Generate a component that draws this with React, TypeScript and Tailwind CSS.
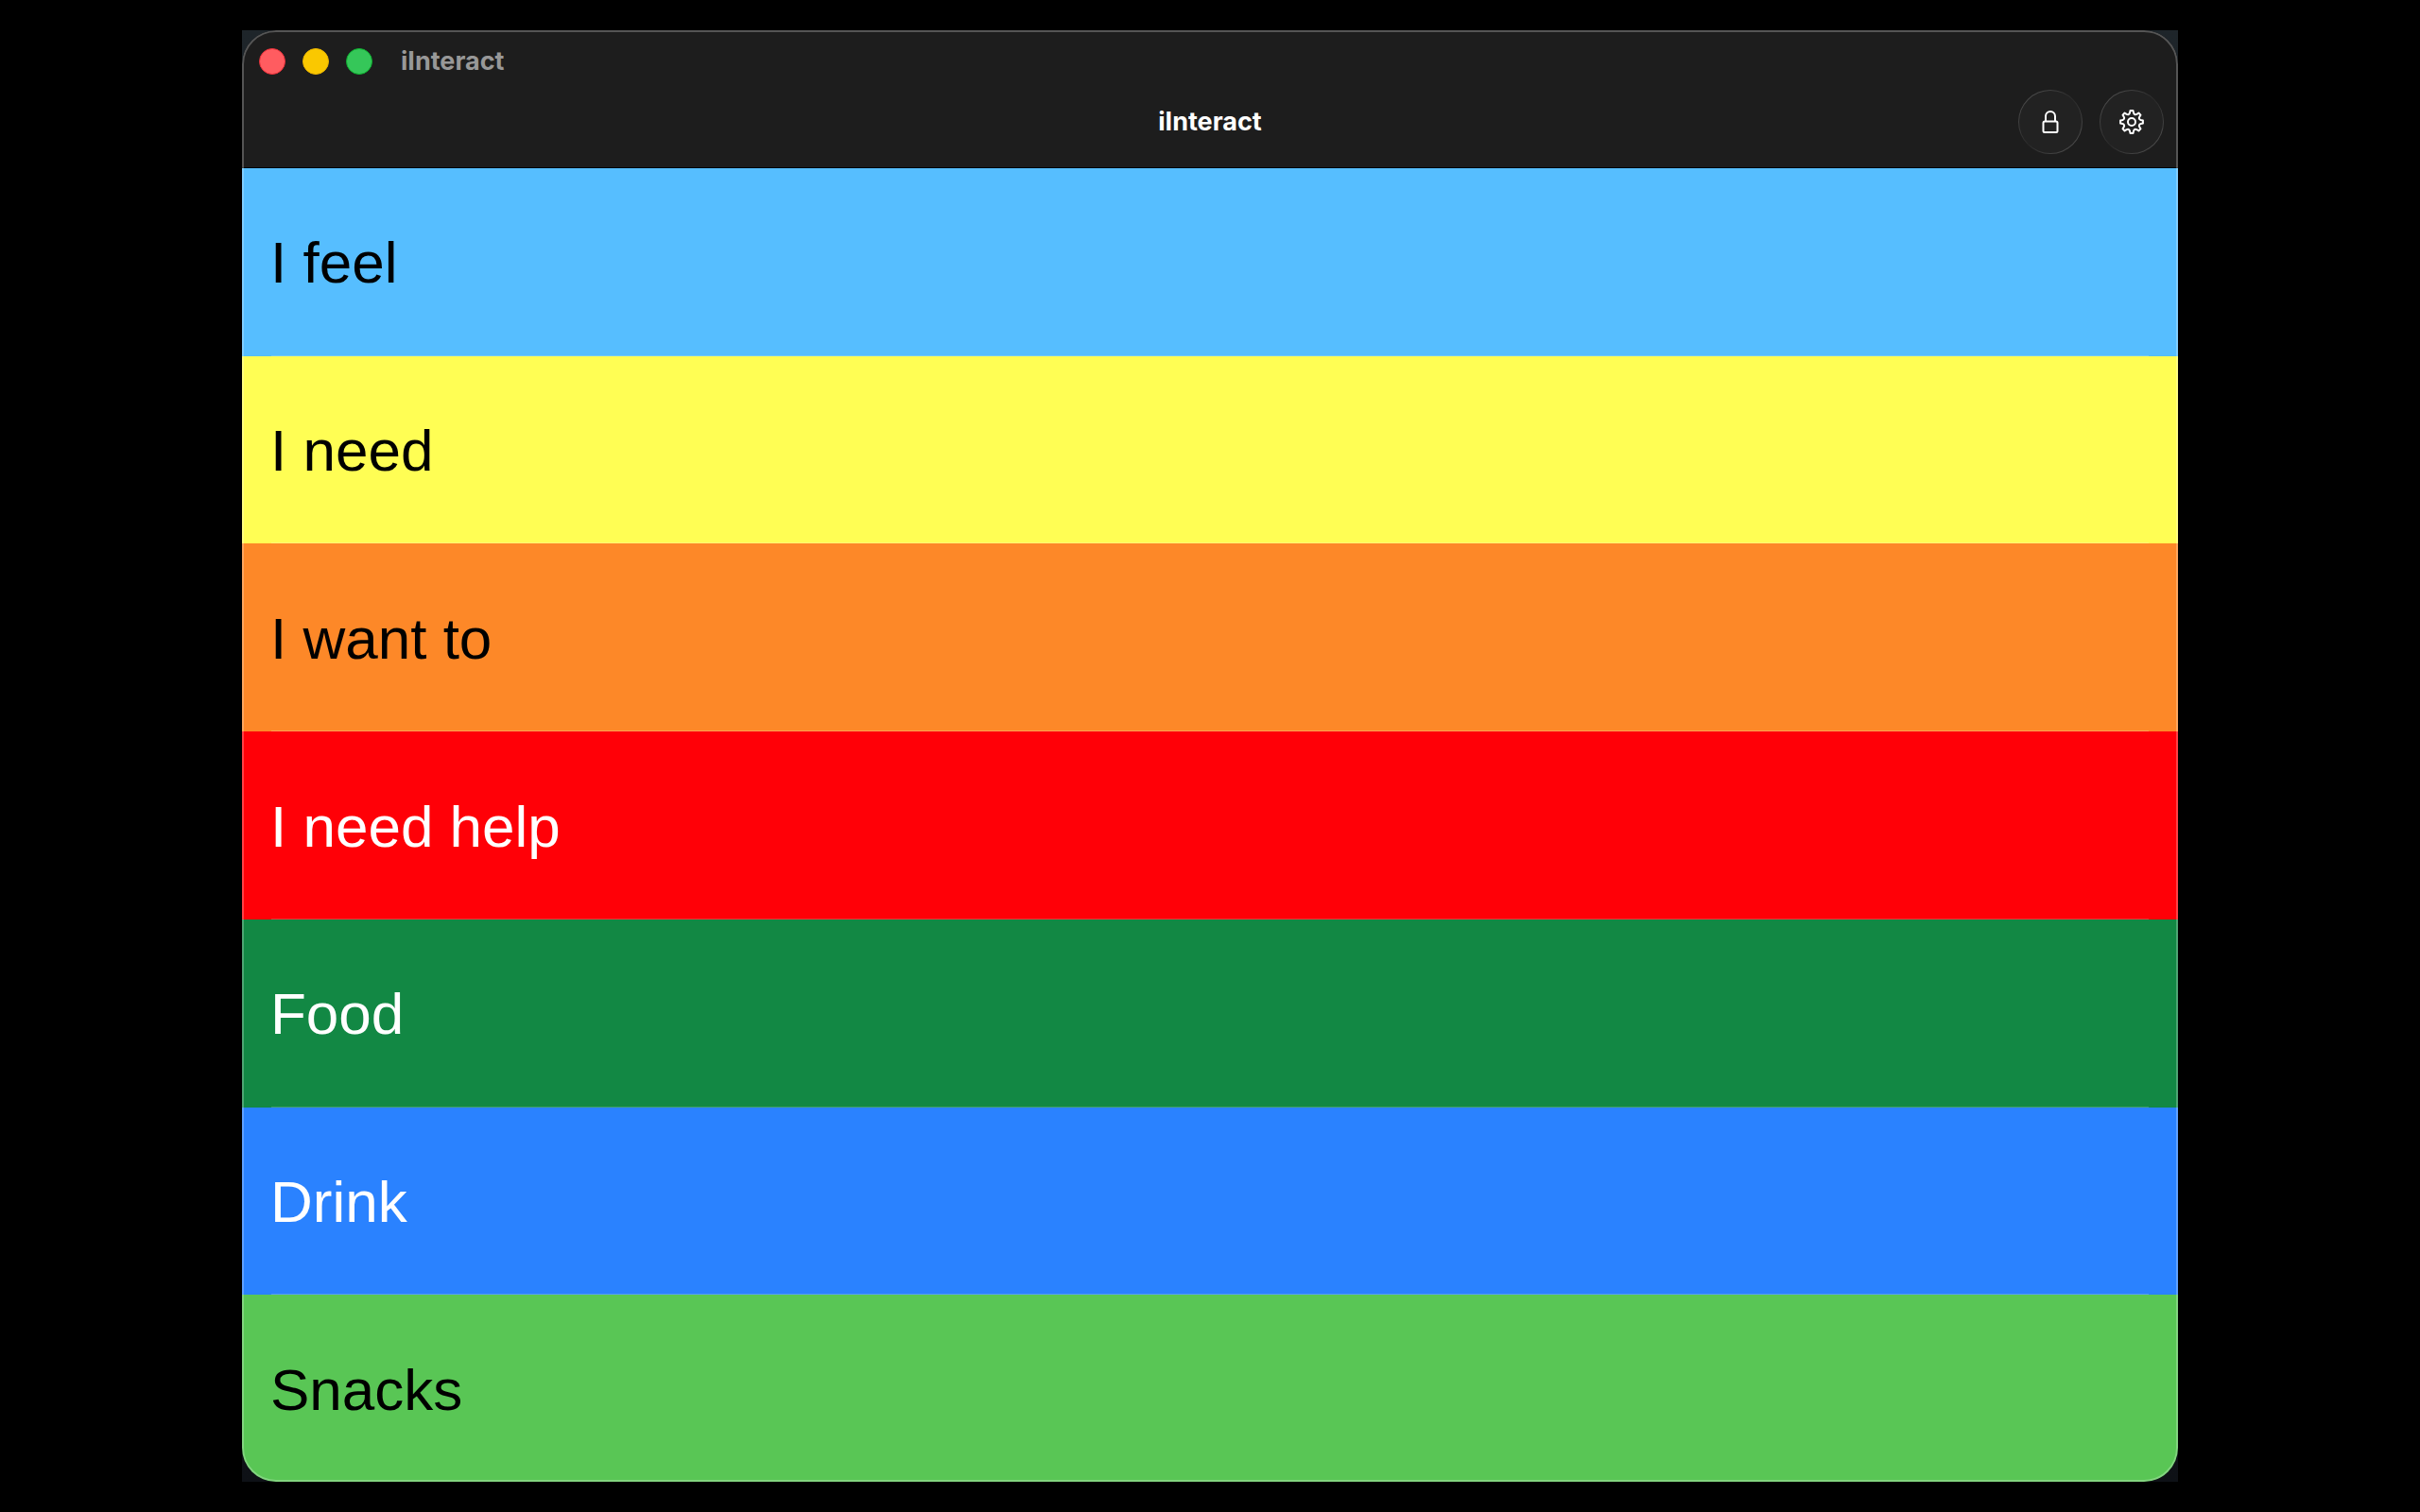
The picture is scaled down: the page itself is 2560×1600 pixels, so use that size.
import type { ReactNode } from "react";

interface Panel {
  title: string;
  className: string;
}

const panels: Panel[] = [
  { title: "I feel", className: "bg-[#56beff] text-black" },
  { title: "I need", className: "bg-[#fffe54] text-black" },
  { title: "I want to", className: "bg-[#fd8828] text-black" },
  { title: "I need help", className: "bg-[#ff0007] text-white" },
  { title: "Food", className: "bg-[#128844] text-white" },
  { title: "Drink", className: "bg-[#2a82ff] text-white" },
  { title: "Snacks", className: "bg-[#59c655] text-black" },
];

const point = (radius: number, degrees: number) => {
  const rad = ((degrees - 90) * Math.PI) / 180;
  return `${(14 + radius * Math.cos(rad)).toFixed(2)} ${(14 + radius * Math.sin(rad)).toFixed(2)}`;
};

// Eight teeth, with a scalloped valley after each one
const gearPath =
  Array.from({ length: 8 }, (_, i) => {
    const a = i * 45;
    return [
      `${i === 0 ? "M" : "L"}${point(9.8, a - 12)}`,
      `L${point(12, a - 7)}`,
      `L${point(12, a + 7)}`,
      `L${point(9.8, a + 12)}`,
      `Q${point(7.6, a + 22.5)} ${point(9.8, a + 33)}`,
    ].join(" ");
  }).join(" ") + " Z";

function LockIcon() {
  return (
    <svg viewBox="0 0 28 28" className="size-7" fill="none" stroke="currentColor" strokeWidth="2">
      <rect x="6.5" y="13.5" width="15" height="11.5" rx="1.5" />
      <path d="M9 13.5V8a5 5 0 0 1 10 0v5.5" />
    </svg>
  );
}

function GearIcon() {
  return (
    <svg viewBox="0 0 28 28" className="size-7" fill="none" stroke="currentColor" strokeWidth="2" strokeLinejoin="round">
      <path d={gearPath} />
      <circle cx="14" cy="14" r="4" />
    </svg>
  );
}

function ToolbarButton({ label, children }: { label: string; children: ReactNode }) {
  return (
    <button
      aria-label={label}
      className="flex size-[68px] items-center justify-center rounded-full bg-linear-135 from-[#585858] via-[#2a2a2a] to-[#585858] p-px text-white"
    >
      <span className="flex size-full items-center justify-center rounded-full bg-[#222222]">{children}</span>
    </button>
  );
}

function WindowHeader() {
  return (
    <header className="border-b border-black bg-[#1d1d1d] pb-[14px] font-['Inter',sans-serif] text-[27px] leading-8">
      {/* Title bar */}
      <div className="flex h-[63px] items-center px-[18px] pt-[2px]">
        <div className="flex gap-[18px]">
          <button aria-label="Close" className="size-7 rounded-full border border-[#e8303a] bg-[#ff5c60]" />
          <button aria-label="Minimize" className="size-7 rounded-full border border-[#eab400] bg-[#fac800]" />
          <button aria-label="Zoom" className="size-7 rounded-full border border-[#0eb030] bg-[#35c759]" />
        </div>
        <span className="ml-[30px] font-bold text-[#989898]">iInteract</span>
      </div>

      {/* Toolbar */}
      <div className="grid grid-cols-[1fr_auto_1fr] items-center px-[15px]">
        <h1 className="col-start-2 font-bold text-white">iInteract</h1>
        <div className="flex justify-end gap-[18px]">
          <ToolbarButton label="Lock">
            <LockIcon />
          </ToolbarButton>
          <ToolbarButton label="Settings">
            <GearIcon />
          </ToolbarButton>
        </div>
      </div>
    </header>
  );
}

export default function App() {
  return (
    <div className="flex min-h-screen flex-col bg-black px-[10%] py-8">
      <div className="flex flex-1 flex-col bg-linear-to-b from-[#1e252a] to-[#0e1116]">
        <main className="relative flex flex-1 flex-col overflow-hidden rounded-[36px]">
          <WindowHeader />
          <ul className="flex flex-1 flex-col font-['Liberation_Sans',Arial,sans-serif] text-[62px] leading-[72px]">
            {panels.map((panel) => (
              <li key={panel.title} className={`flex flex-1 flex-col ${panel.className}`}>
                <button className="flex-1 px-[30px] pt-[3px] text-left">{panel.title}</button>
                <div className="mx-[31px] h-px bg-white/20 in-[li:last-child]:hidden" />
              </li>
            ))}
          </ul>
          {/* Light rim of the window */}
          <div className="pointer-events-none absolute inset-0 rounded-[36px] border-2 border-white/25" />
        </main>
      </div>
    </div>
  );
}
